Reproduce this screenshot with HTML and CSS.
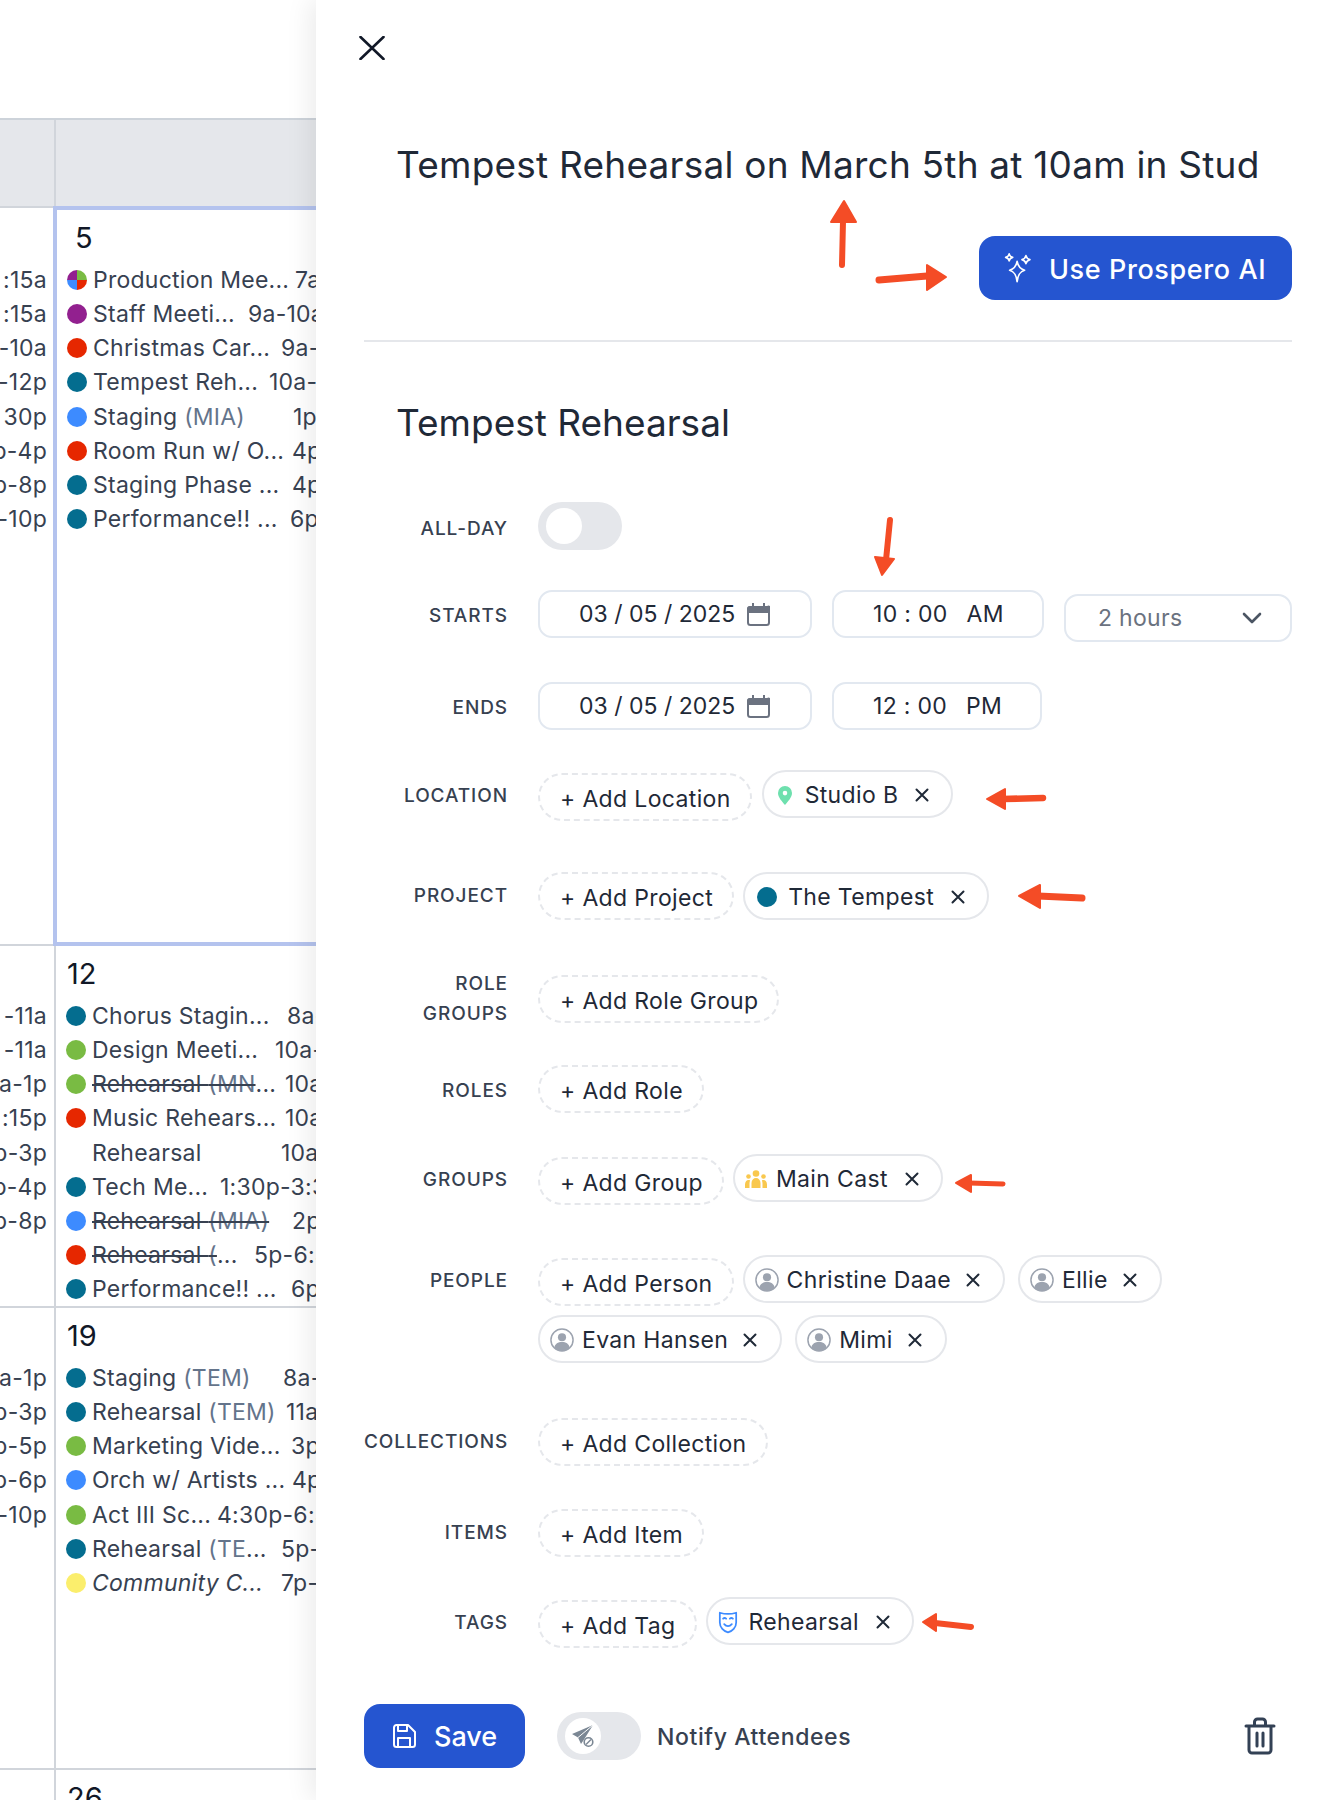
FILE: index.html
```html
<!DOCTYPE html>
<html lang="en">
<head>
<meta charset="utf-8">
<title>Tempest Rehearsal</title>
<link rel="stylesheet" href="styles.css">
</head>
<body>
<svg class="defs" width="0" height="0" aria-hidden="true">
  <symbol id="x" viewBox="0 0 14 14"><path d="M1.5 1.5l11 11M12.5 1.5l-11 11" fill="none" stroke="currentColor" stroke-width="2" stroke-linecap="round"/></symbol>
  <symbol id="person" viewBox="0 0 26 26"><circle cx="13" cy="13" r="12" fill="#fff" stroke="#9ca3af" stroke-width="1.6"/><circle cx="13" cy="10" r="4.4" fill="#9ca3af"/><path d="M4.6 21.5c1-4.4 4-6.2 8.4-6.2s7.4 1.8 8.4 6.2a12 12 0 0 1-16.8 0z" fill="#9ca3af"/></symbol>
  <symbol id="cal" viewBox="0 0 23 23"><path d="M5 0h2v3h9V0h2v3h2a3 3 0 0 1 3 0v7H0V6a3 3 0 0 1 3-3h2z" fill="#6b7280"/><rect x="1" y="4" width="21" height="18" rx="2.5" fill="none" stroke="#6b7280" stroke-width="2"/><rect x="1" y="4" width="21" height="5" fill="#6b7280"/></symbol>
</svg>
<div class="page">
  <div class="cal">
    <div class="head"><div class="head-l"></div><div class="head-r"></div></div>

    <div class="week week-a">
      <div class="side">
        <div>:15a</div><div>:15a</div><div>-10a</div><div>-12p</div><div>30p</div><div>3p-4p</div><div>6p-8p</div><div>-10p</div>
      </div>
      <div class="day selected">
        <div class="num">5</div>
        <div class="ev"><i class="dot pie"></i><span class="tt w202">Production Mee...</span><span>7a-8a</span></div>
        <div class="ev"><i class="dot purple"></i><span class="tt w155">Staff Meeti...</span><span>9a-10a</span></div>
        <div class="ev"><i class="dot red"></i><span class="tt w188">Christmas Car...</span><span>9a-10a</span></div>
        <div class="ev"><i class="dot teal"></i><span class="tt w176">Tempest Reh...</span><span>10a-12p</span></div>
        <div class="ev"><i class="dot blue"></i><span class="tt w200">Staging <em>(MIA)</em></span><span>1p-3p</span></div>
        <div class="ev"><i class="dot red"></i><span class="tt w199">Room Run w/ O...</span><span>4p-5p</span></div>
        <div class="ev"><i class="dot teal"></i><span class="tt w199">Staging Phase ...</span><span>4p-6p</span></div>
        <div class="ev"><i class="dot teal"></i><span class="tt w197">Performance!! ...</span><span>6p-10p</span></div>
      </div>
    </div>

    <div class="week week-b">
      <div class="side">
        <div>-11a</div><div>-11a</div><div>10a-1p</div><div>:15p</div><div>1p-3p</div><div>3p-4p</div><div>6p-8p</div>
      </div>
      <div class="day">
        <div class="num">12</div>
        <div class="ev"><i class="dot teal"></i><span class="tt w195">Chorus Stagin...</span><span>8a-9a</span></div>
        <div class="ev"><i class="dot green"></i><span class="tt w183">Design Meeti...</span><span>10a-11a</span></div>
        <div class="ev"><i class="dot green"></i><span class="tt w193"><s>Rehearsal <em>(MN</em></s>...</span><span>10a-1p</span></div>
        <div class="ev"><i class="dot red"></i><span class="tt w193">Music Rehears...</span><span>10a-1p</span></div>
        <div class="ev"><i class="dot none"></i><span class="tt w189">Rehearsal</span><span>10a-1p</span></div>
        <div class="ev"><i class="dot teal"></i><span class="tt w128">Tech Me...</span><span>1:30p-3:30p</span></div>
        <div class="ev"><i class="dot blue"></i><span class="tt w200"><s>Rehearsal <em>(MIA)</em></s></span><span>2p-4p</span></div>
        <div class="ev"><i class="dot red"></i><span class="tt w162"><s>Rehearsal <em>(</em></s>...</span><span>5p-6:30p</span></div>
        <div class="ev"><i class="dot teal"></i><span class="tt w199">Performance!! ...</span><span>6p-10p</span></div>
      </div>
    </div>

    <div class="week week-c">
      <div class="side">
        <div>10a-1p</div><div>1p-3p</div><div>3p-5p</div><div>4p-6p</div><div>-10p</div>
      </div>
      <div class="day">
        <div class="num">19</div>
        <div class="ev"><i class="dot teal"></i><span class="tt w191">Staging <em>(TEM)</em></span><span>8a-11a</span></div>
        <div class="ev"><i class="dot teal"></i><span class="tt w194">Rehearsal <em>(TEM)</em></span><span>11a-2p</span></div>
        <div class="ev"><i class="dot green"></i><span class="tt w199">Marketing Vide...</span><span>3p-5p</span></div>
        <div class="ev"><i class="dot blue"></i><span class="tt w200">Orch w/ Artists ...</span><span>4p-6p</span></div>
        <div class="ev"><i class="dot green"></i><span class="tt w125">Act III Sc...</span><span>4:30p-6:30p</span></div>
        <div class="ev"><i class="dot teal"></i><span class="tt w189">Rehearsal <em>(TE</em>...</span><span>5p-8p</span></div>
        <div class="ev it"><i class="dot yellow"></i><span class="tt w189">Community C...</span><span>7p-9p</span></div>
      </div>
    </div>

    <div class="week week-d">
      <div class="side"></div>
      <div class="day"><div class="num">26</div></div>
    </div>
  </div>

  <div class="panel">
    <svg class="close" width="26" height="24" viewBox="0 0 26 24"><path d="M1.5 1l23 22M24.5 1l-23 22" fill="none" stroke="#111827" stroke-width="2.600" stroke-linecap="round"/></svg>
    <div class="title prompt">Tempest Rehearsal on March 5th at 10am in Stud</div>
    <div class="ai-row">
      <div class="btn ai">
        <svg width="28" height="30" viewBox="0 0 30 34" fill="none" stroke="#fff" stroke-width="1.9" stroke-linejoin="round"><path d="M14 9.500c1 5.500 3.500 8.500 8.500 10-5 1.500-7.500 4.500-8.500 13-1-8.500-3.500-11.500-8.500-13 5-1.500 7.500-4.500 8.500-10z"/><path d="M5 1c.5 2.300 1.500 3.500 4 4-2.500.5-3.500 1.700-4 4-.5-2.300-1.500-3.500-4-4 2.500-.5 3.500-1.700 4-4zM24 3c.6 2.600 1.800 3.800 4.500 4.500-2.700.7-3.900 1.900-4.500 4.500-.6-2.600-1.800-3.800-4.500-4.500 2.700-.7 3.900-1.900 4.500-4.500z"/></svg>
        <span>Use Prospero AI</span>
      </div>
    </div>
    <div class="rule"></div>
    <div class="title name">Tempest Rehearsal</div>

    <div class="form">
      <div class="row">
        <div class="label low-label">All-day</div>
        <div class="field"><div class="toggle"><div class="knob"></div></div></div>
      </div>
      <div class="row m39">
        <div class="label">Starts</div>
        <div class="field gap-time">
          <div class="input date"><span>03 / 05 / 2025</span><svg width="23" height="23"><use href="#cal"/></svg></div>
          <div class="input time t-am"><span>10 : 00</span><span>AM</span></div>
          <div class="select"><span>2 hours</span><svg width="20" height="12" viewBox="0 0 20 12"><path d="M2 2l8 8 8-8" fill="none" stroke="#4b5563" stroke-width="2.6" stroke-linecap="round" stroke-linejoin="round"/></svg></div>
        </div>
      </div>
      <div class="row m44">
        <div class="label">Ends</div>
        <div class="field gap-time">
          <div class="input date"><span>03 / 05 / 2025</span><svg width="23" height="23"><use href="#cal"/></svg></div>
          <div class="input time t-pm"><span>12 : 00</span><span>PM</span></div>
        </div>
      </div>
      <div class="row m40">
        <div class="label">Location</div>
        <div class="field">
          <div class="add low wide-gap">+ Add Location</div>
          <div class="chip"><svg class="pin" width="14" height="19" viewBox="0 0 14 19"><path fill-rule="evenodd" d="M7 0a7 7 0 0 1 7 7c0 4.500-4.200 8.500-7 12C4.200 15.500 0 11.500 0 7a7 7 0 0 1 7-7zm0 4.800a2.300 2.300 0 1 0 0 4.600 2.300 2.300 0 0 0 0-4.600z" fill="#6ee0ae"/></svg><span>Studio B</span><svg class="cx" width="14" height="14"><use href="#x"/></svg></div>
        </div>
      </div>
      <div class="row m54">
        <div class="label up">Project</div>
        <div class="field">
          <div class="add">+ Add Project</div>
          <div class="chip"><i class="dot teal"></i><span>The Tempest</span><svg class="cx" width="14" height="14"><use href="#x"/></svg></div>
        </div>
      </div>
      <div class="row m55">
        <div class="label two">Role<br>Groups</div>
        <div class="field"><div class="add">+ Add Role Group</div></div>
      </div>
      <div class="row m42">
        <div class="label">Roles</div>
        <div class="field"><div class="add">+ Add Role</div></div>
      </div>
      <div class="row m41">
        <div class="label">Groups</div>
        <div class="field">
          <div class="add low">+ Add Group</div>
          <div class="chip"><svg width="22" height="18" viewBox="0 0 22 18" fill="#f9c84e"><circle cx="11" cy="3.500" r="3.300"/><circle cx="3.500" cy="6.500" r="2.300"/><circle cx="18.500" cy="6.500" r="2.300"/><path d="M6.500 18v-5c0-3 2-5 4.500-5s4.500 2 4.500 5v5zM0 18v-3.500C0 12 1.500 10 3.500 10c.6 0 1.200.1 1.600.4-.4 1-.6 2-.6 3V18zM22 18v-3.500c0-2.500-1.500-4.500-3.500-4.500-.6 0-1.200.1-1.600.4.400 1 .6 2 .6 3V18z"/></svg><span>Main Cast</span><svg class="cx" width="14" height="14"><use href="#x"/></svg></div>
        </div>
      </div>
      <div class="row m53">
        <div class="label">People</div>
        <div class="field wrap">
          <div class="add low">+ Add Person</div>
          <div class="chip"><svg width="24" height="24"><use href="#person"/></svg><span>Christine Daae</span><svg class="cx" width="14" height="14"><use href="#x"/></svg></div>
          <div class="chip"><svg width="24" height="24"><use href="#person"/></svg><span>Ellie</span><svg class="cx" width="14" height="14"><use href="#x"/></svg></div>
          <div class="chip"><svg width="24" height="24"><use href="#person"/></svg><span>Evan Hansen</span><svg class="cx" width="14" height="14"><use href="#x"/></svg></div>
          <div class="chip"><svg width="24" height="24"><use href="#person"/></svg><span>Mimi</span><svg class="cx" width="14" height="14"><use href="#x"/></svg></div>
        </div>
      </div>
      <div class="row m55">
        <div class="label up">Collections</div>
        <div class="field"><div class="add">+ Add Collection</div></div>
      </div>
      <div class="row m43">
        <div class="label up">Items</div>
        <div class="field"><div class="add">+ Add Item</div></div>
      </div>
      <div class="row m40">
        <div class="label">Tags</div>
        <div class="field">
          <div class="add low">+ Add Tag</div>
          <div class="chip"><svg class="mask" width="20" height="24" viewBox="0 0 18 22" fill="none" stroke="#3d8bff" stroke-width="1.600" stroke-linecap="round" stroke-linejoin="round"><path d="M1.500 2.500c5 1.500 10 1.500 15 0v9c0 4.500-3.500 8-7.500 9-4-1-7.500-4.500-7.500-9z"/><path d="M4.500 8c.8-.8 2-.8 2.800 0M10.700 8c.8-.8 2-.8 2.800 0M5.500 13c2 2.300 5 2.300 7 0"/></svg><span>Rehearsal</span><svg class="cx" width="14" height="14"><use href="#x"/></svg></div>
        </div>
      </div>
    </div>

    <div class="foot">
      <div class="btn save">
        <svg width="24" height="24" viewBox="0 0 24 24" fill="none" stroke="#fff" stroke-width="2" stroke-linejoin="round"><path d="M2 3.500A2.500 2.500 0 0 1 4.500 1H16l7 7v12.500a2.500 2.500 0 0 1-2.500 2.500h-16A2.500 2.500 0 0 1 2 20.500z"/><path d="M6 1.500V7h9V1.500M6 23v-9h12v9"/></svg>
        <span>Save</span>
      </div>
      <div class="toggle notify">
        <div class="knob">
          <svg width="24" height="24" viewBox="0 0 24 24"><path d="M22 1L1 10l6 3.500L10 20l3-4.500z" fill="#7b8794"/><path d="M22 1L7 13.500" stroke="#fff" stroke-width="1"/><circle cx="17.500" cy="18" r="4.300" fill="#fff" stroke="#7b8794" stroke-width="1.600"/><path d="M15 20.500l5-5" stroke="#7b8794" stroke-width="1.500"/></svg>
        </div>
      </div>
      <div class="notify-text">Notify Attendees</div>
      <svg class="trash" width="32" height="38" viewBox="0 0 32 38" fill="none" stroke="#334155" stroke-width="3" stroke-linecap="round" stroke-linejoin="round"><path d="M2 9h28M10.500 9V5a3 3 0 0 1 3-3h5a3 3 0 0 1 3 3v4M5 9v24a3 3 0 0 0 3 3h16a3 3 0 0 0 3-3V9M13 16v13M19 16v13"/></svg>
    </div>
  </div>

  <svg class="arrows" width="1340" height="1800" viewBox="0 0 1340 1800" fill="#f44c26" stroke="#f44c26" stroke-linejoin="round">
    <path d="M842 265l1-44" fill="none" stroke-width="6" stroke-linecap="round"/><path d="M844 201l-13 21h25z" stroke-width="2"/>
    <path d="M879 280l48-4" fill="none" stroke-width="7" stroke-linecap="round"/><path d="M927 265v25l19-13z" stroke-width="2"/>
    <path d="M890 520l-4 40" fill="none" stroke-width="6" stroke-linecap="round"/><path d="M875 557l19 2-12 16z" stroke-width="2"/>
    <path d="M1003 799l40-1" fill="none" stroke-width="6.500" stroke-linecap="round"/><path d="M987 799l18-10v20z" stroke-width="2"/>
    <path d="M1038 896l44 2" fill="none" stroke-width="7" stroke-linecap="round"/><path d="M1019 896l21-11v23z" stroke-width="2"/>
    <path d="M969 1183l34 1" fill="none" stroke-width="5" stroke-linecap="round"/><path d="M956 1183l15-8v17z" stroke-width="2"/>
    <path d="M935 1623l36 4" fill="none" stroke-width="6" stroke-linecap="round"/><path d="M923 1622l13-8v17z" stroke-width="2"/>
  </svg>
</div>
</body>
</html>
```
FILE: styles.css
```css
* { box-sizing: border-box; }
html, body { margin: 0; padding: 0; background: #fff; }
body { font-family: Inter, "Liberation Sans", sans-serif; color: #1f2937; }
.defs { position: absolute; }
.page { position: relative; display: flex; width: 1340px; height: 1800px; overflow: hidden; }

/* calendar */
.cal { flex: none; width: 316px; padding-top: 118px; overflow: hidden; color: #374151; font-size: 23px; letter-spacing: .25px; }
.head { display: flex; height: 90px; background: #e5e7eb; border-top: 2px solid #cdd3da; border-bottom: 2px solid #d1d5db; }
.head-l { width: 56px; border-right: 2px solid #d1d5db; flex: none; }
.week { display: flex; border-bottom: 2px solid #d1d5db; }
.week-a { height: 738px; }
.week-b { height: 362px; }
.week-c { height: 462px; }
.week-d { height: 40px; border-bottom: 0; }
.side { flex: none; width: 54px; padding-top: 53px; overflow: hidden; }
.week-a .side { padding-top: 55px; }
.side div { display: flex; justify-content: flex-end; height: 34.15px; line-height: 34px; padding-right: 7px; white-space: nowrap; }
.day { flex: none; width: 262px; border-left: 2px solid #d1d5db; padding-left: 10px; overflow: hidden; }
.day.selected { width: 263px; height: 740px; margin: -2px 0 -2px -1px; border: 4px solid #b4c3ee; border-right: 0; padding-left: 10px; }
.num { height: 53px; line-height: 56px; font-size: 29px; letter-spacing: 0; color: #111827; padding-left: 1px; }
.selected .num { padding-left: 8px; }
.ev { display: flex; align-items: center; height: 34.15px; white-space: nowrap; }
.dot { flex: none; display: block; width: 20px; height: 20px; border-radius: 50%; }
.ev .dot { margin-right: 6px; }
.tt { flex: none; }
.tt em { font-style: normal; color: #64748b; }
.it .tt { font-style: italic; }
.teal { background: #046d8f; }
.green { background: #79bb43; }
.red { background: #e62700; }
.blue { background: #3d8bff; }
.purple { background: #92208f; }
.yellow { background: #fbee6c; }
.none { background: transparent; }
.pie { background: conic-gradient(#79bb43 0 25%, #e62700 25% 50%, #3d8bff 50% 75%, #92208f 75%); }
.w125 { width: 125px; } .w128 { width: 128px; } .w155 { width: 155px; } .w162 { width: 162px; }
.w176 { width: 176px; } .w183 { width: 183px; } .w188 { width: 188px; } .w189 { width: 189px; }
.w191 { width: 191px; } .w193 { width: 193px; } .w194 { width: 194px; } .w195 { width: 195px; }
.w197 { width: 197px; } .w199 { width: 199px; } .w200 { width: 200px; } .w202 { width: 202px; }

/* panel */
.panel { position: relative; z-index: 1; flex: 1; min-width: 0; padding: 36px 48px 0; background: #fff; box-shadow: -6px 0 24px rgba(0, 0, 0, .08); }
.close { display: block; margin-left: -5px; }
.title { font-size: 37px; line-height: 48px; color: #1f2937; margin-left: 32px; white-space: nowrap; }
.prompt { margin-top: 81px; letter-spacing: .22px; }
.ai-row { display: flex; justify-content: flex-end; margin-top: 47px; }
.btn { display: flex; align-items: center; height: 64px; background: #2555d0; color: #fff; border-radius: 16px; font-weight: 500; font-size: 27px; }
.ai { width: 313px; padding-left: 25px; gap: 17px; letter-spacing: .6px; }
.ai span { margin-top: 2px; }
.rule { height: 2px; background: #e5e7eb; margin-top: 40px; }
.name { margin-top: 57px; }

.form { margin-top: 55px; }
.row { display: grid; grid-template-columns: 144px 1fr; column-gap: 30px; }
.m39 { margin-top: 39px; } .m40 { margin-top: 40px; } .m41 { margin-top: 41px; } .m42 { margin-top: 42px; } .m43 { margin-top: 43px; }
.m44 { margin-top: 44px; } .m53 { margin-top: 53px; } .m54 { margin-top: 54px; } .m55 { margin-top: 55px; }
.label { height: 48px; line-height: 51px; text-align: right; font-size: 19px; font-weight: 500; letter-spacing: .92px; text-transform: uppercase; color: #374151; white-space: nowrap; }
.label.two { line-height: 30px; height: 60px; margin: -6px 0 -6px; }
.label.up { margin-top: -2px; }
.label.low-label { margin-top: 1px; }
.field { display: flex; flex-wrap: nowrap; align-items: flex-start; gap: 9px; min-height: 48px; font-size: 23px; color: #1f2937; }
.field.wrap { flex-wrap: wrap; gap: 12px 13px; }
.field.wrap .add { margin-right: -4px; }
.field.wrap .chip { padding-right: 23px; gap: 8px; }
.field.wrap .cx { margin-left: 7px; }
.gap-time { gap: 20px; }

.toggle { width: 84px; height: 48px; border-radius: 24px; background: #e5e7eb; padding: 6px 8px; }
.knob { width: 36px; height: 36px; border-radius: 50%; background: #fff; display: flex; align-items: center; justify-content: center; }

.input, .select { display: flex; align-items: center; height: 48px; border: 2px solid #e2e8f0; border-radius: 14px; background: #fff; letter-spacing: .3px; }
.date { width: 274px; padding-left: 39px; gap: 12px; letter-spacing: 0; }
.time { width: 212px; padding-left: 39px; gap: 19px; }
.t-pm { width: 210px; }
.select { width: 228px; height: 48px; margin: 4px 0 -4px; padding: 0 28px 0 32px; justify-content: space-between; color: #6b7280; }

.add, .chip { display: flex; align-items: center; height: 48px; border-radius: 24px; white-space: nowrap; letter-spacing: .35px; }
.add { padding: 3px 19px 0 20px; border: 2px dashed #e5e7eb; }
.add.low { margin-top: 3px; margin-bottom: -3px; }
.add.wide-gap { margin-right: 1px; }
.chip { padding: 2px 22px 0 10px; gap: 9px; border: 2px solid #e5e7eb; }
.chip .cx { margin-left: 8px; color: #1f2937; }
.chip .dot { margin: 0 2px; }
.chip .pin { margin: 0 4px; }
.chip .mask { margin-right: 2px; }

.foot { display: flex; align-items: center; margin-top: 59px; }
.save { width: 161px; padding-left: 28px; gap: 18px; flex: none; }
.notify { flex: none; margin-left: 32px; }
.notify-text { margin-left: 16px; font-size: 23px; font-weight: 500; letter-spacing: .6px; color: #374151; padding-top: 2px; }
.trash { margin-left: auto; margin-right: 16px; }

.arrows { position: absolute; left: 0; top: 0; z-index: 2; pointer-events: none; }
```
